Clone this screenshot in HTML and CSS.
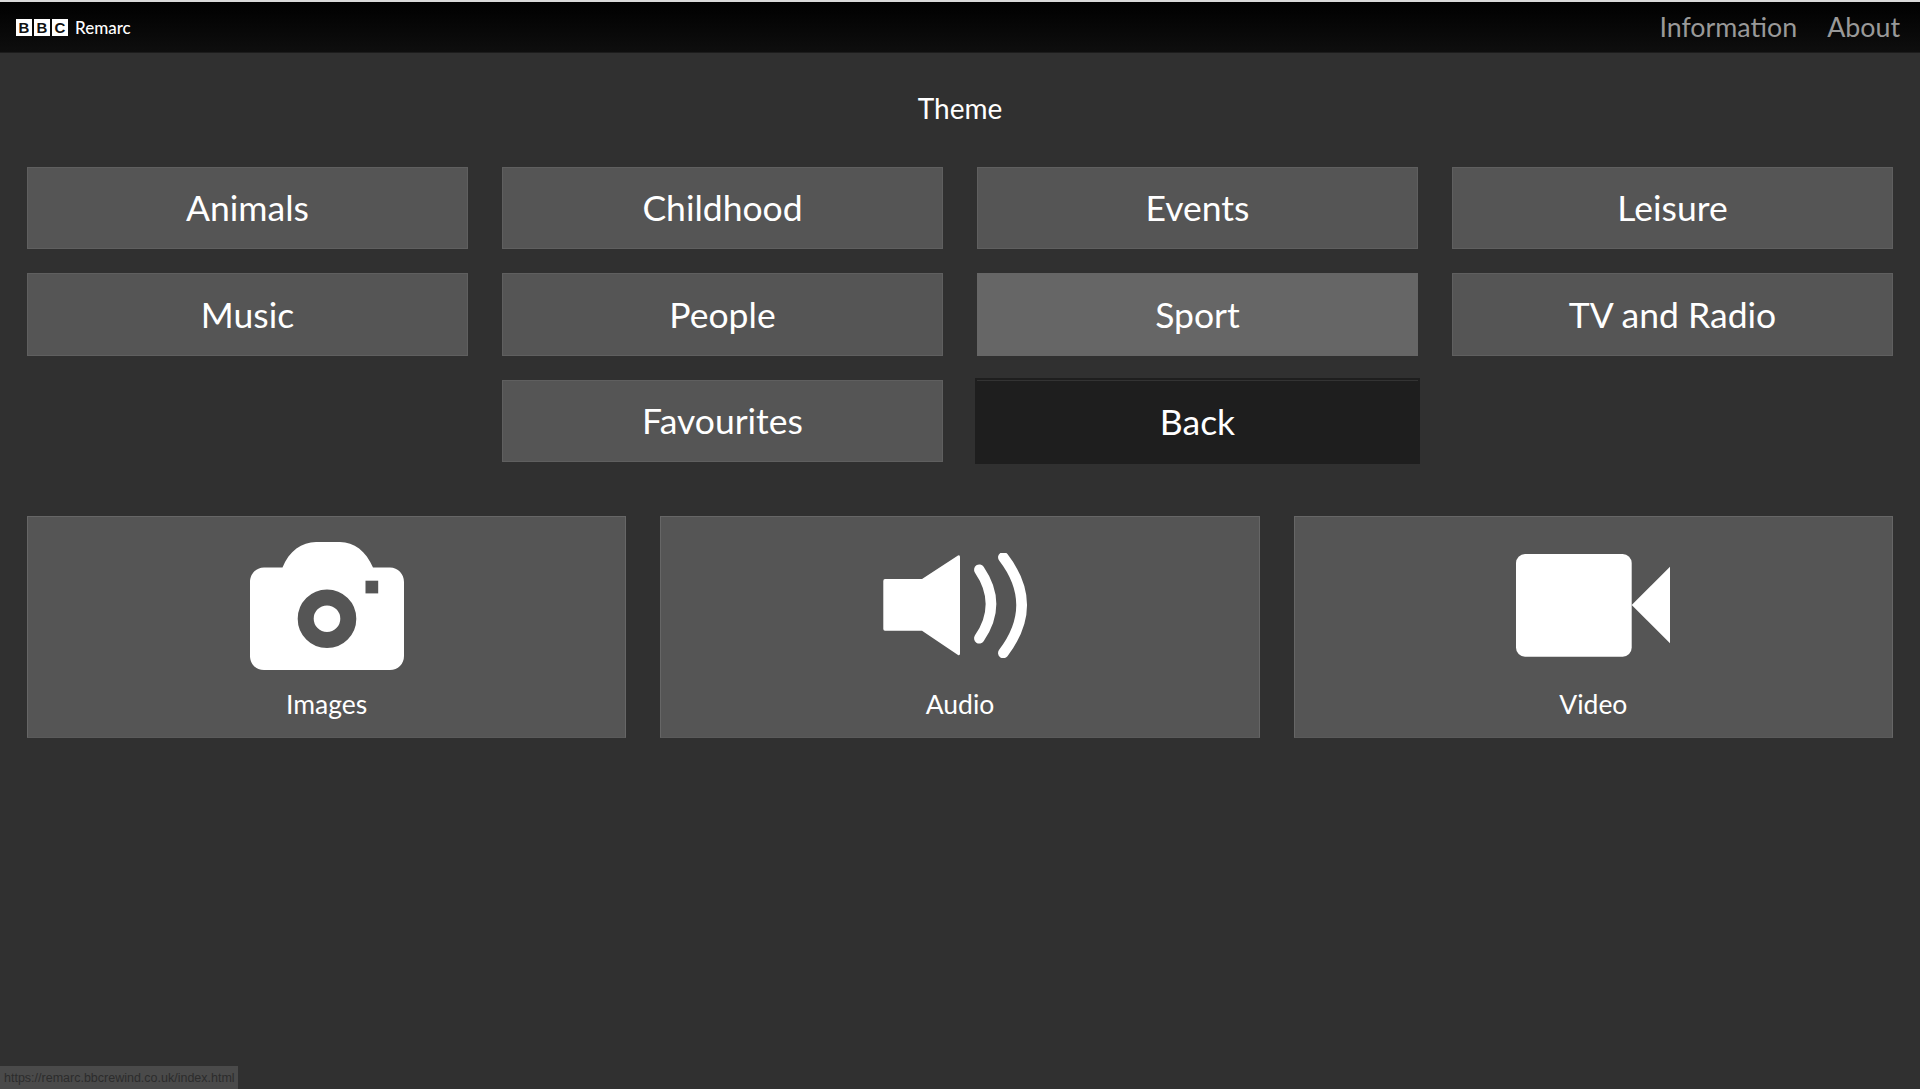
FILE: index.html
```html
<!DOCTYPE html>
<html lang="en">
<head>
<meta charset="utf-8">
<title>BBC Remarc</title>
<link rel="stylesheet" href="styles.css">
</head>
<body>
<header class="topbar">
  <div class="brand">
    <div class="bbc"><span>B</span><span>B</span><span>C</span></div>
    <span class="brand-name">Remarc</span>
  </div>
  <nav class="topnav"><a>Information</a><a>About</a></nav>
</header>
<main class="content">
  <h1 class="title">Theme</h1>
  <div class="themes">
    <button class="btn">Animals</button>
    <button class="btn">Childhood</button>
    <button class="btn">Events</button>
    <button class="btn">Leisure</button>
    <button class="btn">Music</button>
    <button class="btn">People</button>
    <button class="btn btn-hover">Sport</button>
    <button class="btn">TV and Radio</button>
    <button class="btn btn-fav">Favourites</button>
    <button class="btn btn-back">Back</button>
  </div>
  <div class="media">
    <div class="card">
      <div class="icon-box">
        <svg class="icon" width="154" height="128" viewBox="0 0 154 128">
          <path fill="#fff" d="M32.500 25.500C39 9 52 0 66 0H90C104 0 116 9 123 25.500H140C148 25.500 154 32 154 40V114C154 122 148 128 140 128H14C6 128 0 122 0 114V40C0 32 6 25.500 14 25.500Z"/>
          <circle cx="77" cy="76.700" r="21.300" fill="none" stroke="#555" stroke-width="16"/>
          <rect x="115.500" y="38.700" width="12.700" height="12.700" fill="#555"/>
        </svg>
      </div>
      <span class="card-label">Images</span>
    </div>
    <div class="card">
      <div class="icon-box">
        <svg class="icon" width="154" height="105" viewBox="0 0 154 105">
          <path fill="#fff" d="M2 26H39L75 2.500Q77 1.500 77 4V100.500Q77 103 75 102L39 77.700H2Q0.300 77.700 0.300 76V28Q0.300 26 2 26Z"/>
          <path fill="none" stroke="#fff" stroke-width="10.500" stroke-linecap="round" d="M96.300 16.700Q119.700 51 96.300 85.300"/>
          <path fill="none" stroke="#fff" stroke-width="10.500" stroke-linecap="round" d="M120.300 4.300Q157 52 120.300 100"/>
        </svg>
      </div>
      <span class="card-label">Audio</span>
    </div>
    <div class="card">
      <div class="icon-box">
        <svg class="icon" width="154" height="103" viewBox="0 0 154 103">
          <rect x="0" y="0" width="115.700" height="102.700" rx="9" fill="#fff"/>
          <path fill="#fff" d="M115.700 51L154 12.700V89.300Z"/>
        </svg>
      </div>
      <span class="card-label">Video</span>
    </div>
  </div>
</main>
<div class="status">https://remarc.bbcrewind.co.uk/index.html</div>
</body>
</html>
```
FILE: styles.css
```css
* { box-sizing: border-box; }
html, body { margin: 0; height: 100%; }
body {
  background: #303030;
  color: #fff;
  font-family: "Lato", "Open Sans", sans-serif;
  overflow: hidden;
}
.topbar {
  height: 53px;
  border-top: 2px solid #d8d8d8;
  border-bottom: 1px solid #1c1c1c;
  background: linear-gradient(#000, #0e0e0e);
  display: flex;
  align-items: center;
  justify-content: space-between;
  padding: 0 20px 0 16px;
}
.brand { display: flex; align-items: center; gap: 7px; }
.bbc { display: flex; gap: 2px; }
.bbc span {
  width: 16px;
  height: 17px;
  background: #fff;
  color: #111;
  font: bold 15px/17px "Liberation Sans", sans-serif;
  text-align: center;
}
.brand-name { font-size: 17px; font-weight: 500; }
.topnav { display: flex; gap: 30px; }
.topnav a { font-size: 26.800px; color: #999; }
.content { padding: 0 27px; }
.title {
  margin: 0;
  padding-top: 37px;
  height: 113.600px;
  font-size: 28px;
  line-height: 36px;
  font-weight: 400;
  text-align: center;
}
.themes {
  display: grid;
  grid-template-columns: repeat(4, 441px);
  column-gap: 34px;
  row-gap: 24px;
  grid-auto-rows: 82.500px;
}
.btn {
  border: 1px solid #5f5f5f;
  background: #555;
  color: #fff;
  font-family: inherit;
  font-size: 35.500px;
  padding: 0;
}
.btn-hover { background: #666; border-color: #666; }
.btn-fav { grid-column: 2; }
.btn-back {
  grid-column: 3;
  background: #1e1e1e;
  border: 0;
  border-top: 1px solid #333;
  box-shadow: 0 0 0 2px #1e1e1e;
}
.media {
  display: grid;
  grid-template-columns: repeat(3, 1fr);
  column-gap: 34px;
  margin-top: 53.500px;
}
.card {
  height: 222px;
  background: #555;
  border: 1px solid #666;
  border-bottom-color: #5a5a5a;
  padding-top: 25.400px;
  display: flex;
  flex-direction: column;
  align-items: center;
}
.icon-box {
  height: 128px;
  display: flex;
  align-items: center;
  justify-content: center;
}
.icon { display: block; }
.card-label { font-size: 26.500px; line-height: 36px; margin-top: 16px; }
.status {
  position: absolute;
  left: 0;
  bottom: 0;
  width: 238px;
  height: 23px;
  background: #4a4a4a;
  color: #2c2c2c;
  font: 12.500px/25px "Liberation Sans", sans-serif;
  padding-left: 4px;
  white-space: nowrap;
  overflow: hidden;
}
```
